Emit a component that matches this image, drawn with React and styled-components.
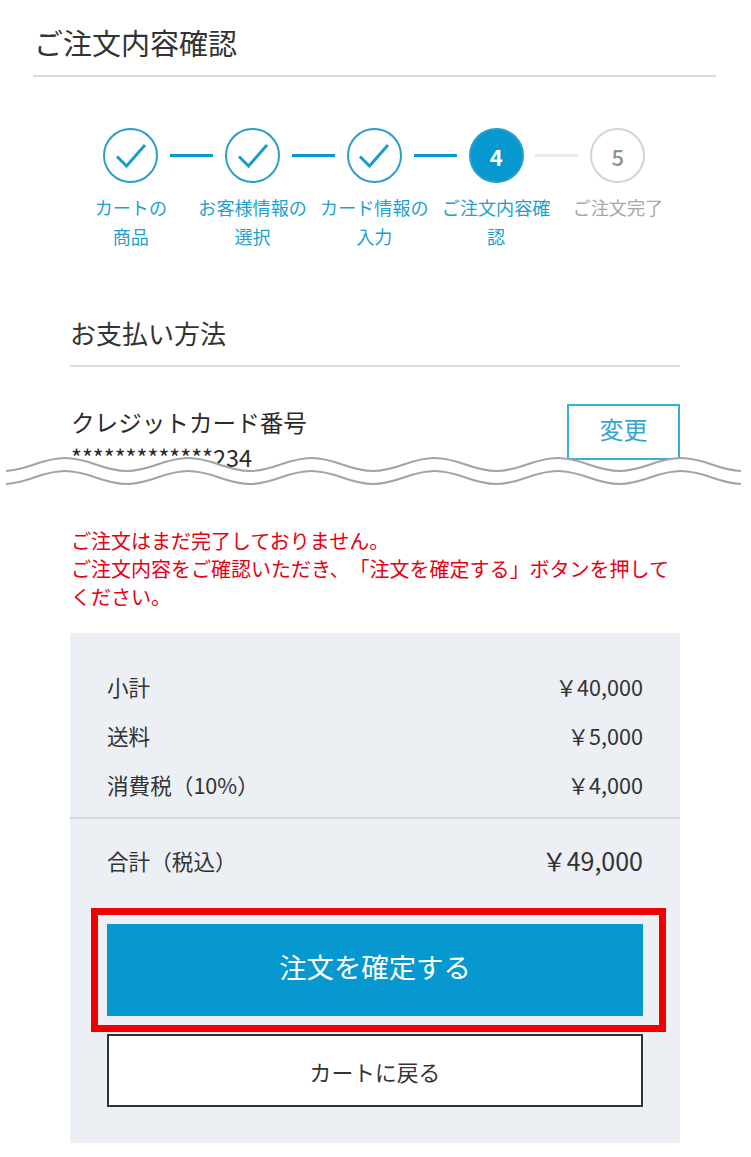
import React from "react"
import styled, { createGlobalStyle } from "styled-components"

const BLUE = "#0798d0"

const GlobalStyle = createGlobalStyle`
  html, body {
    margin: 0;
    padding: 0;
    background: #fff;
  }
  body {
    font-family: "Noto Sans CJK JP", "Noto Sans", sans-serif;
    color: #333;
    text-spacing-trim: space-all;
  }
`

const steps = [
  { lines: ["カートの", "商品"], state: "done" },
  { lines: ["お客様情報の", "選択"], state: "done" },
  { lines: ["カード情報の", "入力"], state: "done" },
  { lines: ["ご注文内容確", "認"], state: "current", num: 4 },
  { lines: ["ご注文完了"], state: "todo", num: 5 },
]

const Check = () => (
  <svg width="32" height="26" viewBox="0 0 32 26" fill="none">
    <path d="M2 13.5 L11.5 23 L30 2" stroke="#1c9ccd" strokeWidth="3" />
  </svg>
)

// ふたつ重なった波線。下の内容を隠すので白で塗る
const Wave = () => {
  const period = 123.2
  const half = period / 2
  const k = period * 0.2
  const build = (y) => {
    // 最初の谷から山→谷と繰り返す
    let x = 59 - half
    let d = `M${x} ${y + 13}`
    for (let i = 0; i < 7; i++) {
      d += ` C${x + k} ${y + 13} ${x + half - k} ${y} ${x + half} ${y}`
      x += half
      d += ` C${x + k} ${y} ${x + half - k} ${y + 13} ${x + half} ${y + 13}`
      x += half
    }
    return d
  }
  const top = build(1)
  const bottom = build(14)
  return (
    <WaveBox>
      <svg width="735" height="48" viewBox="0 0 735 48" fill="none">
        <path d={`${top} V48 H-10 Z`} fill="#fff" />
        <path d={top} stroke="#a3a3a3" strokeWidth="2" />
        <path d={bottom} stroke="#a3a3a3" strokeWidth="2" />
      </svg>
    </WaveBox>
  )
}

const App = () => {
  return (
    <React.Fragment>
      <GlobalStyle />
      <Page>
        <TopArea>
          <PageTitle>ご注文内容確認</PageTitle>
          <Stepper>
            {steps.map((step, i) => (
              <Step key={i}>
                <Circle $state={step.state}>
                  {step.state === "done" ? <Check /> : step.num}
                </Circle>
                {i < 4 && <Connector $on={i < 3} />}
                <StepLabel $todo={step.state === "todo"}>
                  {step.lines.map((line) => (
                    <div key={line}>{line}</div>
                  ))}
                </StepLabel>
              </Step>
            ))}
          </Stepper>
          <Section>
            <SectionTitle>お支払い方法</SectionTitle>
            <CardRow>
              <div>
                <CardLabel>クレジットカード番号</CardLabel>
                <CardNumber>*************234</CardNumber>
              </div>
              <ChangeBtn>変更</ChangeBtn>
            </CardRow>
          </Section>
          <Wave />
        </TopArea>
        <Lower>
          <Notice>
            ご注文はまだ完了しておりません。
            <br />
            ご注文内容をご確認いただき、「注文を確定する」ボタンを押してください。
          </Notice>
          <Panel>
            <Rows>
              <Row>
                <span>小計</span>
                <span>￥40,000</span>
              </Row>
              <Row>
                <span>送料</span>
                <span>￥5,000</span>
              </Row>
              <Row>
                <span>消費税（10%）</span>
                <span>￥4,000</span>
              </Row>
            </Rows>
            <TotalRow>
              <span>合計（税込）</span>
              <TotalPrice>￥49,000</TotalPrice>
            </TotalRow>
            <Highlight>
              <ConfirmBtn>注文を確定する</ConfirmBtn>
            </Highlight>
            <BackBtn>カートに戻る</BackBtn>
          </Panel>
        </Lower>
      </Page>
    </React.Fragment>
  )
}

export default App

const Page = styled.div`
  width: 751px;
  height: 1157px;
  overflow: hidden;
`

const TopArea = styled.div`
  position: relative;
  height: 506px;
  padding: 0 35px 0 33px;
  box-sizing: border-box;
  overflow: hidden;
`

const PageTitle = styled.h1`
  margin: 0;
  height: 77px;
  padding: 21px 0 0 1px;
  box-sizing: border-box;
  font-size: 29px;
  line-height: 42px;
  font-weight: 400;
  color: #333;
  border-bottom: 2px solid #dcdcdc;
`

const Stepper = styled.div`
  display: flex;
  padding: 51px 0 0 37px;
`

const Step = styled.div`
  position: relative;
  width: 121.75px;
  display: flex;
  flex-direction: column;
  align-items: center;
`

const Circle = styled.div`
  width: 55px;
  height: 55px;
  box-sizing: border-box;
  border-radius: 50%;
  display: flex;
  align-items: center;
  justify-content: center;
  font-size: 22px;
  font-weight: ${(p) => (p.$state === "current" ? 700 : 500)};
  color: ${(p) => (p.$state === "current" ? "#fff" : "#8f8f8f")};
  background: ${(p) => (p.$state === "current" ? BLUE : "#fff")};
  border: 2px solid ${(p) => (p.$state === "todo" ? "#d4d4d4" : "#2a9fcc")};
`

const Connector = styled.div`
  position: absolute;
  left: 100px;
  top: 26px;
  width: 43px;
  height: 3px;
  background: ${(p) => (p.$on ? BLUE : "#e9e9e9")};
`

const StepLabel = styled.div`
  margin-top: 10px;
  width: 121px;
  text-align: center;
  font-size: 18.1px;
  line-height: 29px;
  white-space: nowrap;
  color: ${(p) => (p.$todo ? "#a8a8a8" : "#1f9fd0")};
`

const Section = styled.section`
  margin: 63px 36px 0 37px;
`

const SectionTitle = styled.h2`
  margin: 0;
  height: 51px;
  font-size: 26px;
  line-height: 38px;
  font-weight: 400;
  color: #333;
  border-bottom: 2px solid #dcdcdc;
`

const CardRow = styled.div`
  display: flex;
  justify-content: space-between;
  align-items: flex-start;
  padding-top: 35px;
`

const CardLabel = styled.div`
  font-size: 23.6px;
  line-height: 40px;
  color: #2b2b2b;
  padding-left: 1px;
`

const CardNumber = styled.div`
  font-size: 23.4px;
  line-height: 30px;
  color: #2b2b2b;
  padding-left: 1px;
`

const ChangeBtn = styled.button`
  width: 113px;
  height: 56px;
  margin-top: 2px;
  padding: 0 0 7px;
  background: #fff;
  border: 2px solid #35aed8;
  border-radius: 0;
  color: #35a6d2;
  font-family: inherit;
  font-size: 24px;
`

const WaveBox = styled.div`
  position: absolute;
  left: 6px;
  top: 457px;
  line-height: 0;
`

const Lower = styled.div`
  padding: 21px 71px 0 70px;
`

const Notice = styled.p`
  margin: 0;
  font-size: 20px;
  line-height: 28px;
  color: #e60012;
  padding-left: 1px;
`

const Panel = styled.div`
  margin-top: 22px;
  height: 510px;
  background: #eceff3;
  box-sizing: border-box;
  padding-top: 29px;
`

const Rows = styled.div`
  padding: 0 37px 8px;
  border-bottom: 2px solid #d4d8dc;
`

const Row = styled.div`
  display: flex;
  justify-content: space-between;
  height: 49px;
  font-size: 21.6px;
  line-height: 49px;
  color: #333;
`

const TotalRow = styled.div`
  display: flex;
  justify-content: space-between;
  align-items: center;
  height: 82px;
  padding: 0 37px;
  font-size: 21.6px;
  color: #333;
`

const TotalPrice = styled.span`
  font-size: 25px;
`

const Highlight = styled.div`
  margin: 7px 14px 0 21px;
  border: 7px solid #f00000;
  padding: 9px 16px 9px 9px;
  height: 124px;
  box-sizing: border-box;
`

const ConfirmBtn = styled.button`
  display: block;
  width: 100%;
  height: 92px;
  border: 0;
  border-radius: 0;
  padding: 0 0 8px;
  background: ${BLUE};
  color: #fff;
  font-family: inherit;
  font-size: 27.4px;
`

const BackBtn = styled.button`
  display: block;
  width: 536px;
  height: 73px;
  margin: 2px 0 0 37px;
  padding: 2px 0 0;
  background: #fff;
  border: 2px solid #333;
  border-radius: 0;
  color: #333;
  font-family: inherit;
  font-size: 21.8px;
`
